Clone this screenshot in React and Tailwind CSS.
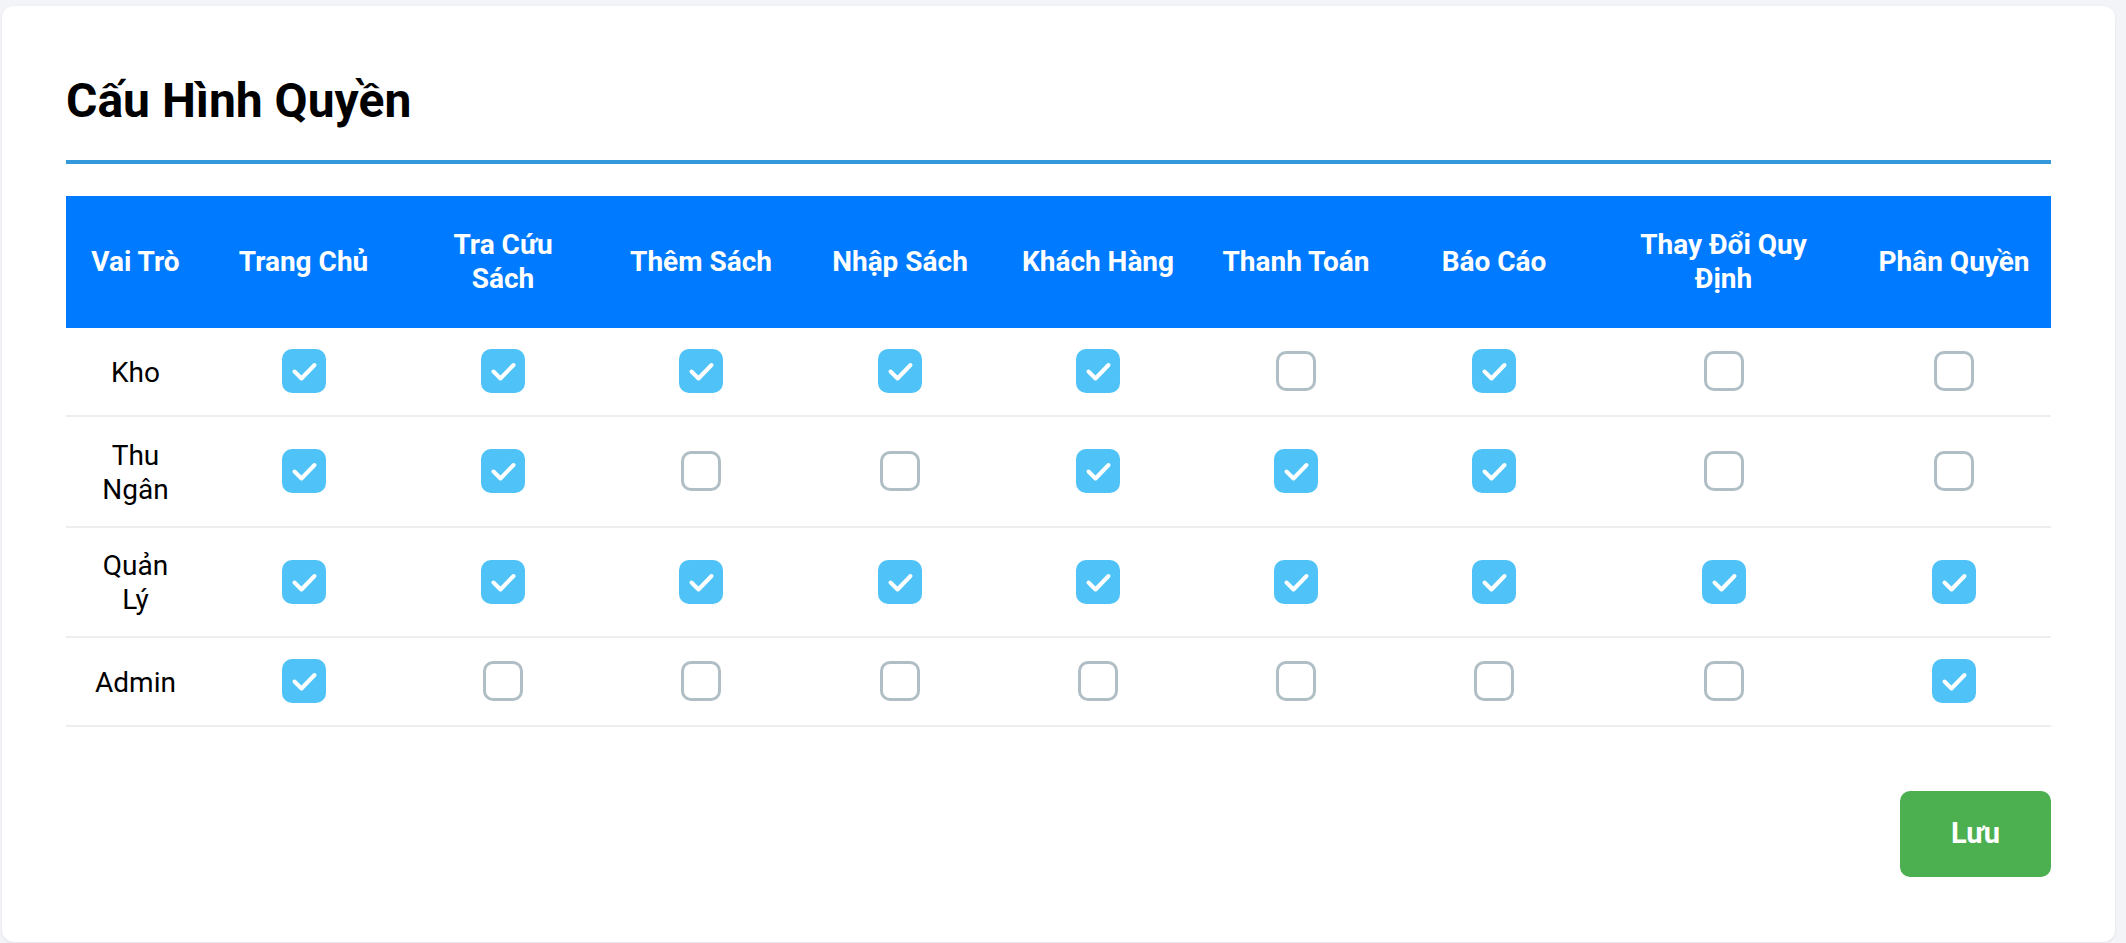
import React from "react";

const headers = [
  ["Vai Trò"],
  ["Trang Chủ"],
  ["Tra Cứu", "Sách"],
  ["Thêm Sách"],
  ["Nhập Sách"],
  ["Khách Hàng"],
  ["Thanh Toán"],
  ["Báo Cáo"],
  ["Thay Đổi Quy", "Định"],
  ["Phân Quyền"],
];

const rows = [
  { name: ["Kho"], h: "h-[89px]", v: [1, 1, 1, 1, 1, 0, 1, 0, 0] },
  { name: ["Thu", "Ngân"], h: "h-[111px]", v: [1, 1, 0, 0, 1, 1, 1, 0, 0] },
  { name: ["Quản", "Lý"], h: "h-[110px]", v: [1, 1, 1, 1, 1, 1, 1, 1, 1] },
  { name: ["Admin"], h: "h-[89px]", v: [1, 0, 0, 0, 0, 0, 0, 0, 1] },
];

const cols =
  "grid grid-cols-[139px_197px_202px_194px_204px_192px_204px_192px_267px_194px]";

function Box({ on }) {
  if (on) {
    return (
      <div className="w-[44px] h-[44px] rounded-[10px] bg-[#4fc3f7] flex items-center justify-center">
        <svg width="44" height="44" viewBox="0 0 44 44">
          <polyline
            points="12.5,22.5 19.5,29.5 32.5,16"
            fill="none"
            stroke="#ffffff"
            strokeWidth="4"
            strokeLinecap="round"
            strokeLinejoin="round"
          />
        </svg>
      </div>
    );
  }
  return (
    <div className="w-[40px] h-[40px] rounded-[10px] border-[3px] border-[#b0bec5] bg-white" />
  );
}

export default function App() {
  return (
    <div
      className="w-[2126px] h-[943px] bg-[#f3f4f8] pt-[6px] pl-[2px] overflow-hidden"
      style={{ fontFamily: "Roboto, 'Noto Sans', 'Liberation Sans', sans-serif" }}
    >
      <div className="w-[2113px] h-[936px] bg-white rounded-[12px] shadow-[0_1px_3px_rgba(0,0,0,0.08)] px-[64px] flex flex-col">
        <h1 className="mt-[66px] text-[48px] leading-[1.2] font-bold text-black">
          Cấu Hình Quyền
        </h1>
        <div className="mt-[30px] h-[4px] w-[1985px] bg-[#3498db]" />
        <div className="mt-[32px] w-[1985px]">
          <div className={`${cols} h-[132px] bg-[#007bff]`}>
            {headers.map((h, i) => (
              <div
                key={i}
                className="flex flex-col items-center justify-center text-center text-white font-bold text-[28px] leading-[34px]"
              >
                {h.map((l, j) => (
                  <span key={j}>{l}</span>
                ))}
              </div>
            ))}
          </div>
          {rows.map((r, i) => (
            <div key={i} className={`${cols} ${r.h} border-b-2 border-[#eceeef]`}>
              <div className="flex flex-col items-center justify-center pt-[3px] text-center text-black text-[28px] leading-[34px]">
                {r.name.map((l, j) => (
                  <span key={j}>{l}</span>
                ))}
              </div>
              {r.v.map((on, j) => (
                <div key={j} className="flex items-center justify-center">
                  <Box on={on} />
                </div>
              ))}
            </div>
          ))}
        </div>
        <div className="w-[1985px] flex justify-end mt-[64px]">
          <button className="w-[151px] h-[86px] rounded-[10px] bg-[#4caf50] text-white font-bold text-[29px]">
            Lưu
          </button>
        </div>
      </div>
    </div>
  );
}
